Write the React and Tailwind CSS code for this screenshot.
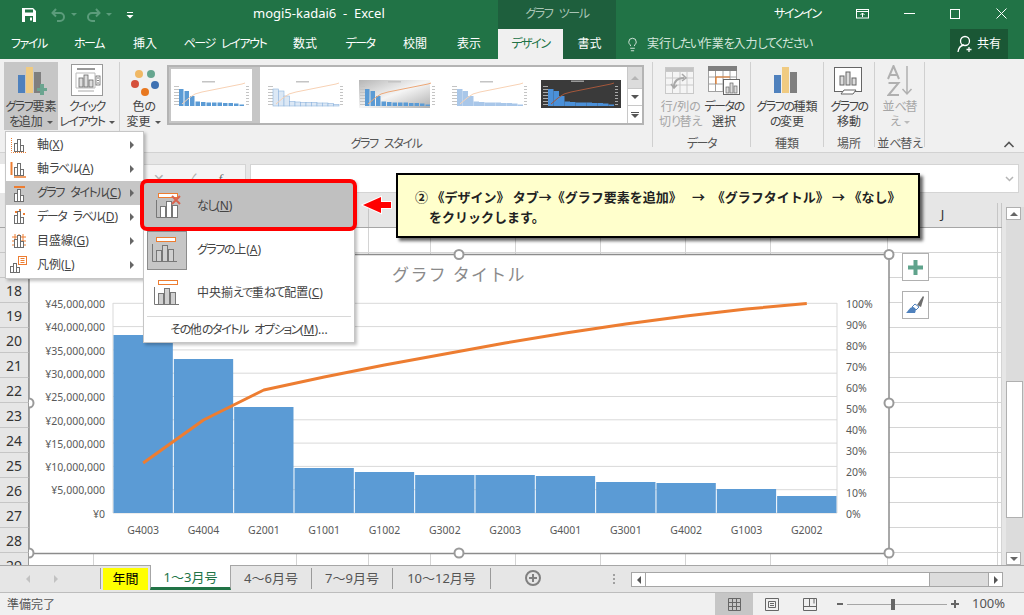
import React from "react";
import { Lightbulb } from "lucide-react";

const bars = [335, 359, 407, 468, 472, 475, 475, 476, 482, 483, 489, 496];
const names = ["G4003","G4004","G2001","G1001","G1002","G3002","G2003","G4001","G3001","G4002","G1003","G2002"];
const lineY = [463, 420, 390, 377, 365, 354, 343, 333, 324, 316, 309, 303.5];
const x0 = 113, bw = 60.33;
const leftAxis = ["¥45,000,000","¥40,000,000","¥35,000,000","¥30,000,000","¥25,000,000","¥20,000,000","¥15,000,000","¥10,000,000","¥5,000,000","¥0"];
const rowNums = [16,17,18,19,20,21,22,23,24,25,26,27,28,29];
const colCells = [0,1,2,3,4,5,6,7,8,9,10];

function K({ children }) {
  const parts = String(children).split(/([ぁ-んァ-ヶー]+)/);
  return <>{parts.map((p, i) => (i % 2 ? <span key={i} className="tracking-[-1.4px]">{p}</span> : p.replace(/ /g, "\u00A0\u00A0")))}</>;
}

function Caret({ c = "border-t-[#555]" }) {
  return <span className={`inline-block w-0 h-0 ml-[4px] align-middle border-x-[3px] border-t-[3px] border-x-transparent ${c}`} />;
}

function TitleBar() {
  return (
    <div className="flex h-[29px] bg-[#217346] text-white shrink-0">
      <div className="w-[253px] flex items-center pl-[22px]">
        <svg width="14" height="14" viewBox="0 0 14 14"><path d="M0 0h11l3 3v11H0z" fill="#fff"/><rect x="3" y="1.500" width="8" height="3" fill="#217346"/><rect x="3" y="8" width="8" height="6" fill="#217346"/><rect x="8" y="9.500" width="2" height="3" fill="#fff"/></svg>
        <svg className="ml-[15px]" width="15" height="14" viewBox="0 0 15 14" fill="none" stroke="#5b9c7b" strokeWidth="2"><path d="M5 1 1.500 5 5 8.500M2 5h7a4 4 0 0 1 0 8H6"/></svg>
        <span className="ml-[5px] w-0 h-0 border-x-[3px] border-t-[3px] border-x-transparent border-t-[#5b9c7b]" />
        <svg className="ml-[9px]" width="15" height="14" viewBox="0 0 15 14" fill="none" stroke="#5b9c7b" strokeWidth="2"><path d="M10 1l3.500 4L10 8.500M13 5H6a4 4 0 0 0 0 8h3"/></svg>
        <span className="ml-[5px] w-0 h-0 border-x-[3px] border-t-[3px] border-x-transparent border-t-[#5b9c7b]" />
        <svg className="ml-[14px]" width="8" height="8" viewBox="0 0 8 8" fill="#fff"><rect x="1" y="1" width="6" height="1"/><path d="M0.500 4h7L4 7.500z"/></svg>
      </div>
      <div className="w-[245px] flex items-center text-[13px] whitespace-pre leading-none pb-[3px]">mogi5-kadai6  -  Excel</div>
      <div className="w-[118px] flex items-center justify-center bg-[#1e5f3d] text-[#a9c4b5] pb-[2px]"><K>グラフ ツール</K></div>
      <div className="flex-1 flex items-center pl-[158px] pb-[2px]">
        <span className="w-[82px]"><K>サインイン</K></span>
        <svg width="14" height="10" viewBox="0 0 14 10" fill="none" stroke="#fff"><rect x="0.500" y="0.500" width="12" height="8.500"/><path d="M0.500 2.500h12M6.500 8V4M4.500 6l2-2 2 2"/></svg>
        <span className="ml-[34px] w-[11px] h-[1px] bg-white" />
        <span className="ml-[35px] w-[10px] h-[10px] border border-white" />
        <svg className="ml-[36px]" width="11" height="11" viewBox="0 0 11 11" stroke="#fff"><path d="M0.500 0.500l10 10M10.500 0.500l-10 10"/></svg>
      </div>
    </div>
  );
}

const tabs = [["ファイル","w-[58px]"],["ホーム","w-[62px]"],["挿入","w-[50px]"],["ページ レイアウト","w-[110px]"],["数式","w-[50px]"],["データ","w-[60px]"],["校閲","w-[50px]"],["表示","w-[58px]"]];

function TabBar() {
  return (
    <div className="flex h-[30px] bg-[#217346] text-white shrink-0 items-stretch">
      {tabs.map(([t, w]) => <div key={t} className={`${w} flex items-center justify-center whitespace-nowrap`}><K>{t}</K></div>)}
      <div className="w-[65px] flex items-center justify-center bg-[#f0f0f0] text-[#217346]"><K>デザイン</K></div>
      <div className="w-[53px] flex items-center justify-center bg-[#1e5f3d]">書式</div>
      <div className="flex items-center ml-[9px] text-[#d5e6dc]">
        <Lightbulb size={15} strokeWidth={1.400} color="#e8f1ec" />
        <span className="ml-[7px]"><K>実行したい作業を入力してください</K></span>
      </div>
      <div className="ml-auto mr-[16px] w-[58px] flex items-center justify-center bg-[#1a5735]">
        <svg width="17" height="18" viewBox="0 0 17 18" fill="none" stroke="#fff" strokeWidth="1.300"><circle cx="8" cy="6" r="4.500"/><path d="M1 17c.5-4 3-6.500 6-7M12 12v5M9.500 14.500h5"/></svg>
        <span className="ml-[3px]">共有</span>
      </div>
    </div>
  );
}

function MiniChart({ v }) {
  const hs = [17, 15, 10, 4.500, 4, 3.500, 3.500, 3.500, 3, 3, 2.500, 1.500];
  const dark = v === 5, gb = v === 3;
  const line = "M10 26 L17 20 L23 16 L30 14 L40 12 L50 10 L60 8 L70 6 L73 5";
  const tick = dark ? "#aaa" : "#c4c4c4";
  return (
    <svg width="80" height="34" viewBox="0 0 80 34">
      {gb && <defs><linearGradient id="gb" x1="0" y1="0" x2="1" y2="1"><stop offset="0" stopColor="#b5b5b5"/><stop offset="0.500" stopColor="#f5f5f5"/><stop offset="1" stopColor="#b0b0b0"/></linearGradient></defs>}
      {dark && <rect x="0" y="2" width="80" height="28" fill="#3a3a3a"/>}
      {gb && <rect x="1" y="2" width="71" height="28" fill="url(#gb)"/>}
      <rect x="30" y={v === 5 ? 2.500 : 3} width="13" height="1.500" fill={dark ? "#999" : "#c4c4c4"}/>
      {[8,11,14,17,20,23,26].map(y => <g key={y}><rect x={2} y={y} width="5" height="1" fill={tick}/><rect x="74" y={y} width="3" height="1" fill={tick}/></g>)}
      {hs.map((h, i) => {
        const x = 7 + i * 5.500;
        if (v === 2) return <rect key={i} x={x} y={28 - h} width="5.500" height={h} fill="#dce8f5" stroke="#8fb5de" strokeWidth="0.600"/>;
        if (v === 4) return <rect key={i} x={x} y={28 - h} width="5.500" height={h} fill="#a9c7e9"/>;
        if (v === 5) return <rect key={i} x={x} y={28 - h} width="5.500" height={h} fill="#4a90d9"/>;
        return <rect key={i} x={x} y={28 - h} width="4.500" height={h} fill="#5b9bd5"/>;
      })}
      <path d={line} fill="none" stroke={dark ? "#a5573a" : gb ? "#eda878" : "#f8d2b5"} strokeWidth="1"/>
    </svg>
  );
}

function BarsBig({ colors }) {
  return (
    <svg width="30" height="30" viewBox="0 0 30 30">
      <rect x="2" y="9" width="7" height="18" fill={colors[0]}/>
      <rect x="10" y="1" width="7" height="26" fill={colors[1]}/>
      <rect x="18" y="6" width="7" height="21" fill={colors[2]}/>
    </svg>
  );
}

function RibbonBtn({ icon, lines, w, caret, dim, hover }) {
  return (
    <div className={`${w} shrink-0 flex flex-col items-center ${hover ? "bg-[#c6c6c6]" : ""} h-[68px] ${dim ? "text-[#a6a6a6]" : ""}`}>
      <div className="h-[37px] flex items-center justify-center">{icon}</div>
      <div className="text-center leading-[15px] whitespace-nowrap">
        <div><K>{lines[0]}</K></div>
        <div><K>{lines[1]}</K>{caret && <Caret c={dim ? "border-t-[#bbb]" : "border-t-[#555]"} />}</div>
      </div>
    </div>
  );
}

function Group({ w, label, children, cls = "" }) {
  return (
    <div className={`${w} shrink-0 flex flex-col h-[85px] border-r border-[#d0d0d0]`}>
      <div className={`h-[72px] flex ${cls}`}>{children}</div>
      <div className="h-[13px] leading-[20px] text-center text-[#555] whitespace-nowrap"><K>{label}</K></div>
    </div>
  );
}

function Ribbon() {
  return (
    <div className="h-[94px] shrink-0 flex pt-[3px] pl-[4px] bg-[#f0f0f0] border-b border-[#d2d2d2] relative">
      <Group w="w-[116px]" label="">
        <RibbonBtn w="w-[54px]" hover caret lines={["グラフ要素","を追加"]} icon={
          <svg width="32" height="34" viewBox="0 0 32 34"><rect x="3" y="11" width="7" height="18" fill="#4f81bd"/><rect x="11" y="3" width="7" height="26" fill="#f0cb82"/><rect x="19" y="8" width="7" height="21" fill="#7f7f7f"/><path d="M22 24h3v-4h4v4h3v3h-3v4h-4v-4h-3z" fill="#6aa48f"/></svg>} />
        <RibbonBtn w="w-[58px]" caret lines={["クイック","レイアウト"]} icon={
          <svg width="33" height="33" viewBox="0 0 33 33" fill="none"><rect x="0.500" y="0.500" width="31" height="31" fill="#fff" stroke="#9a9a9a"/><path d="M6 5h18" stroke="#999" strokeWidth="2"/><path d="M5 9h19v15H5z" stroke="#bbb"/><rect x="8" y="14" width="4" height="9" fill="#ddd" stroke="#666" strokeWidth="0.800"/><rect x="13" y="11" width="4" height="12" fill="#ddd" stroke="#666" strokeWidth="0.800"/><rect x="18" y="16" width="4" height="7" fill="#ddd" stroke="#666" strokeWidth="0.800"/><rect x="25" y="12" width="4" height="9" stroke="#666" strokeWidth="0.800"/><path d="M26 14h2M26 16.500h2M26 19h2" stroke="#666" strokeWidth="0.800"/><path d="M7 27h16" stroke="#aaa"/></svg>} />
      </Group>
      <Group w="w-[533px]" label="グラフ スタイル">
        <RibbonBtn w="w-[47px]" caret lines={["色の","変更"]} icon={
          <svg width="30" height="32" viewBox="0 0 30 32"><circle cx="10" cy="9" r="4" fill="#f0b864"/><circle cx="22" cy="9" r="4" fill="#66a68f"/><circle cx="6" cy="19" r="4" fill="#d5503b"/><circle cx="26" cy="20" r="4" fill="#3f72b2"/><circle cx="16" cy="27" r="4" fill="#e87820"/></svg>} />
        <div className="w-[477px] h-[60px] mt-[3px] flex bg-white border-2 border-[#b4b4b4]">
          <div className="w-[460px] flex">
            <div className="w-[91px] shrink-0 border-[2px] border-r-[8px] border-[#c6c6c6] bg-white flex items-center justify-center"><MiniChart v={1} /></div>
            <div className="w-[92px] shrink-0 flex items-center justify-center"><MiniChart v={2} /></div>
            <div className="w-[92px] shrink-0 flex items-center justify-center"><MiniChart v={3} /></div>
            <div className="w-[92px] shrink-0 flex items-center justify-center"><MiniChart v={4} /></div>
            <div className="w-[89px] shrink-0 flex items-center justify-center"><MiniChart v={5} /></div>
          </div>
          <div className="w-[15px] flex flex-col border-l border-[#c8c8c8]">
            <div className="h-[21px] bg-[#dcdcdc] flex items-center justify-center"><span className="w-0 h-0 border-x-[4px] border-b-[4px] border-x-transparent border-b-[#b5b5b5]" /></div>
            <div className="h-[18px] border-y border-[#c8c8c8] flex items-center justify-center"><span className="w-0 h-0 border-x-[4px] border-t-[4px] border-x-transparent border-t-[#555]" /></div>
            <div className="flex-1 flex flex-col items-center justify-center"><span className="w-[8px] h-[1px] bg-[#555] mb-[1px]" /><span className="w-0 h-0 border-x-[4px] border-t-[4px] border-x-transparent border-t-[#555]" /></div>
          </div>
        </div>
      </Group>
      <Group w="w-[98px]" label="データ" cls="pl-[2px]">
        <RibbonBtn w="w-[50px]" dim lines={["行/列の","切り替え"]} icon={
          <svg width="30" height="28" viewBox="0 0 30 28" fill="none" stroke="#c9c9c9"><rect x="0.500" y="0.500" width="28" height="26" fill="#f5f5f5"/><rect x="0.500" y="0.500" width="28" height="4" fill="#c4c4c4"/><path d="M0 11h29M0 18h29M7.500 5v22M15 5v22M22 5v22"/><path d="M9 20c0-6 4-9 10-9" stroke="#a8a8a8" strokeWidth="2"/><path d="M17 7l4 4-4 3M6 17l3 4 3-3" stroke="#a8a8a8" strokeWidth="1.500"/></svg>} />
        <RibbonBtn w="w-[38px]" lines={["データの","選択"]} icon={
          <svg width="32" height="30" viewBox="0 0 32 30" fill="none" stroke="#a0a0a0"><rect x="0.500" y="0.500" width="28" height="25" fill="#fff"/><rect x="0" y="0" width="29" height="5" fill="#7f7f7f" stroke="none"/><path d="M0 11h29M0 18h29M7.500 5v21M15 5v21M22 5v21"/><path d="M8 18V11h14" stroke="#e87820" strokeWidth="1.200"/><rect x="15.500" y="13.500" width="16" height="15" fill="#fff" stroke="#666"/><rect x="18" y="21" width="3" height="6" fill="#ddd" stroke="#666" strokeWidth="0.700"/><rect x="22" y="17" width="3" height="10" fill="#ddd" stroke="#666" strokeWidth="0.700"/><rect x="26" y="20" width="3" height="7" fill="#ddd" stroke="#666" strokeWidth="0.700"/></svg>} />
      </Group>
      <Group w="w-[73px]" label="種類">
        <RibbonBtn w="w-[72px]" lines={["グラフの種類","の変更"]} icon={<BarsBig colors={["#4f81bd","#f0cb82","#7f7f7f"]} />} />
      </Group>
      <Group w="w-[51px]" label="場所">
        <RibbonBtn w="w-[50px]" lines={["グラフの","移動"]} icon={
          <svg width="30" height="28" viewBox="0 0 30 28" fill="none" stroke="#666"><rect x="0.500" y="0.500" width="27" height="24" fill="#fff"/><rect x="6" y="9" width="4" height="9" fill="#ddd"/><rect x="12" y="5" width="4" height="13" fill="#ddd"/><rect x="18" y="11" width="4" height="7" fill="#ddd"/><path d="M7 27l3-4h12l-3 4z" fill="#fff"/></svg>} />
      </Group>
      <Group w="w-[50px]" label="並べ替え">
        <RibbonBtn w="w-[50px]" dim caret lines={["並べ替","え"]} icon={
          <svg width="27" height="32" viewBox="0 0 27 32" fill="none" stroke="#b0b0b0" strokeWidth="2"><path d="M1 14 6.500 1 12 14M3 10h7"/><path d="M1.500 18h10L1.500 30h10.500"/><path d="M20 1v28M15.500 24l4.500 5 4.500-5" strokeWidth="1.500"/></svg>} />
      </Group>
      <svg className="absolute left-[1003px] top-[82px]" width="12" height="7" viewBox="0 0 12 7" fill="none" stroke="#555" strokeWidth="1.600"><path d="M1.500 6l4.500-4.500L10.500 6"/></svg>
    </div>
  );
}

function FormulaBar() {
  return (
    <div className="h-[50px] shrink-0 bg-[#e6e6e6] flex pt-[11px]">
      <div className="w-[140px] h-[29px] bg-white" />
      <div className="w-[106px] h-[29px] bg-[#f4f4f4] border-y border-r border-[#d4d4d4] flex items-center text-[#b0b0b0]">
        <span className="ml-[13px] text-[14px] leading-none">✕</span>
        <span className="ml-[22px] text-[14px] leading-none">✓</span>
        <span className="ml-[22px] text-[#666] italic text-[13px] leading-none [font-family:'Liberation_Serif',serif]">f<sub className="text-[9px]">x</sub></span>
      </div>
      <div className="ml-[4px] w-[769px] h-[29px] bg-white border border-[#d4d4d4] flex items-center justify-end pr-[4px]">
        <svg width="9" height="6" viewBox="0 0 9 6" fill="none" stroke="#b5b5b5" strokeWidth="1.500"><path d="M1 1l3.500 3.500L8 1"/></svg>
      </div>
    </div>
  );
}

function Chart() {
  const plotLines = [303.3,326.6,349.9,373.2,396.5,419.8,443.1,466.4,489.7,513];
  const handles = [[459,254.5],[889,254.5],[29,403],[889,403],[29,553],[459,553],[889,553]];
  return (
    <svg className="absolute left-[29px] top-[45px]" width="870" height="316" viewBox="29 248 870 316">
      <rect x="29" y="254.500" width="860" height="299" fill="#fff" stroke="#8c8c8c" strokeWidth="1.500"/>
      {plotLines.map(y => <line key={y} x1="113" x2="837" y1={y} y2={y} stroke="#d9d9d9" strokeWidth="1"/>)}
      <line x1="113" x2="113" y1="303" y2="513" stroke="#d9d9d9"/>
      <line x1="837" x2="837" y1="303" y2="513" stroke="#d9d9d9"/>
      {bars.map((t, i) => <rect key={i} x={x0 + i * bw + 0.500} y={t} width={bw - 1} height={513 - t} fill="#5b9bd5"/>)}
      <polyline points={lineY.map((y, i) => `${x0 + bw / 2 + i * bw},${y}`).join(" ")} fill="none" stroke="#ed7d31" strokeWidth="3" strokeLinejoin="round"/>
      <text x="459" y="281" textAnchor="middle" fontSize="17" letterSpacing="1.300" fill="#8a8a8a" className="[font-feature-settings:normal]">グラフ タイトル</text>
      <g fontSize="10.500" fill="#595959">
        {leftAxis.map((t, i) => <text key={t} x="105" y={308 + i * 23.300} textAnchor="end">{t}</text>)}
        {[100,90,80,70,60,50,40,30,20,10,0].map((t, i) => <text key={t} x="846" y={308 + i * 21} >{t}%</text>)}
        {names.map((t, i) => <text key={t} x={x0 + bw / 2 + i * bw} y="534" textAnchor="middle">{t}</text>)}
      </g>
      {handles.map(([x, y]) => <circle key={`${x}-${y}`} cx={x} cy={y} r="4.500" fill="#fff" stroke="#9a9a9a" strokeWidth="2"/>)}
    </svg>
  );
}

function Sheet() {
  const cols = "grid grid-cols-[65px_203px_72px_62px_85px_85px_85px_85px_117px_110px_4px]";
  return (
    <div className="h-[362px] shrink-0 flex relative overflow-hidden">
      <div className="w-[1002px] shrink-0 flex flex-col">
        <div className="h-[25px] shrink-0 flex bg-[#e6e6e6] border-b border-[#a6a6a6]">
          <div className="w-[29px] border-r border-[#a6a6a6]" />
          <div className={`${cols} flex-1`}>
            {colCells.map(c => <div key={c} className="border-r border-[#c6c6c6] flex items-center justify-center text-[#333] text-[13px]">{c === 9 ? "J" : ""}</div>)}
          </div>
        </div>
        {rowNums.map(n => (
          <div key={n} className="h-[25px] shrink-0 flex">
            <div className="w-[29px] shrink-0 bg-[#e6e6e6] border-r border-b border-r-[#9a9a9a] border-b-[#c6c6c6] flex items-center justify-center text-[14px] text-[#333]">{n}</div>
            <div className={`${cols} flex-1 bg-white`}>
              {colCells.map(c => <div key={c} className="border-r border-b border-[#d4d4d4]" />)}
            </div>
          </div>
        ))}
      </div>
      <div className="flex-1 bg-[#e6e6e6] pl-[4px] pt-[4px] pb-[0px] flex flex-col items-stretch">
        <div className="bg-[#dcdcdc] flex-1 flex flex-col">
          <div className="h-[13px] w-[15px] bg-white border border-[#b0b0b0] flex items-center justify-center"><span className="w-0 h-0 border-x-[4px] border-b-[4px] border-x-transparent border-b-[#666]" /></div>
          <div className="h-[137px] w-[17px] mt-[161px] bg-white border border-[#b0b0b0]" />
          <div className="h-[13px] w-[15px] mt-auto bg-white border border-[#b0b0b0] flex items-center justify-center"><span className="w-0 h-0 border-x-[4px] border-t-[4px] border-x-transparent border-t-[#666]" /></div>
        </div>
      </div>
      <Chart />
      <div className="absolute left-[902px] top-[50px] w-[27px] h-[28px] bg-white border border-[#b0b0b0] flex items-center justify-center">
        <svg width="15" height="15" viewBox="0 0 15 15"><path d="M5.500 0h4v5.500H15v4H9.500V15h-4V9.500H0v-4h5.500z" fill="#5fa38c"/></svg>
      </div>
      <div className="absolute left-[902px] top-[88px] w-[27px] h-[28px] bg-white border border-[#b0b0b0] flex items-center justify-center">
        <svg width="21" height="20" viewBox="0 0 21 20"><path d="M12 10L18 1l1 1-3 10z" fill="#6e6e6e"/><path d="M10 9l4 3-3 3-4-3z" fill="#fff" stroke="#4f81bd"/><path d="M8 12c-3 0-4 3-7 6h9c1-2 1-4 0-5z" fill="#4f81bd"/></svg>
      </div>
    </div>
  );
}

function SheetTabs() {
  return (
    <div className="h-[28px] shrink-0 bg-[#e6e6e6] border-y border-[#a6a6a6] border-b-[#bdbdbd] flex text-[13px] text-[#555]">
      <div className="w-[101px] h-[21px] mt-[2px] border-r border-[#9a9a9a] flex items-center pl-[26px]">
        <span className="w-0 h-0 border-y-[4px] border-r-[4px] border-y-transparent border-r-[#c2c2c2]" />
        <span className="ml-[24px] w-0 h-0 border-y-[4px] border-l-[4px] border-y-transparent border-l-[#c2c2c2]" />
      </div>
      <div className="ml-[2px] w-[45px] h-[22px] mt-[2px] bg-[#ffff00] text-black flex items-center justify-center">年間</div>
      <div className="ml-[2px] w-[81px] h-[25px] bg-white border-x border-[#a6a6a6] border-b-[3px] border-b-[#217346] text-[#217346] flex items-center justify-center -mt-[1px] pt-[3px]">1～3月号</div>
      <div className="w-[81px] h-[21px] mt-[2px] border-r border-[#9a9a9a] flex items-center justify-center">4～6月号</div>
      <div className="w-[81px] h-[21px] mt-[2px] border-r border-[#9a9a9a] flex items-center justify-center">7～9月号</div>
      <div className="w-[98px] h-[21px] mt-[2px] border-r border-[#9a9a9a] flex items-center justify-center">10～12月号</div>
      <div className="ml-[34px] mt-[4px] w-[16px] h-[16px] rounded-full border-2 border-[#808080] flex items-center justify-center">
        <svg width="8" height="8" viewBox="0 0 8 8"><path d="M3 0h2v3h3v2H5v3H3V5H0V3h3z" fill="#808080"/></svg>
      </div>
      <div className="ml-[72px] mt-[8px] flex flex-col gap-[2px]">
        <span className="w-[2px] h-[2px] bg-[#a0a0a0]" /><span className="w-[2px] h-[2px] bg-[#a0a0a0]" /><span className="w-[2px] h-[2px] bg-[#a0a0a0]" />
      </div>
      <div className="ml-[16px] mt-[6px] w-[372px] h-[15px] bg-[#dcdcdc] border border-[#a6a6a6] flex">
        <div className="w-[14px] bg-white border-r border-[#a6a6a6] flex items-center justify-center"><span className="w-0 h-0 border-y-[4px] border-r-[4px] border-y-transparent border-r-[#555]" /></div>
        <div className="w-[284px] bg-white border-r border-[#a6a6a6]" />
        <div className="ml-auto w-[14px] bg-white border-l border-[#a6a6a6] flex items-center justify-center"><span className="w-0 h-0 border-y-[4px] border-l-[4px] border-y-transparent border-l-[#555]" /></div>
      </div>
    </div>
  );
}

function StatusBar() {
  return (
    <div className="h-[22px] shrink-0 bg-[#f0f0f0] flex items-center text-[#555]">
      <span className="ml-[7px] w-[708px] pt-[1px]">準備完了</span>
      <div className="w-[38px] h-[22px] bg-[#c6c6c6] flex items-center justify-center">
        <svg width="13" height="13" viewBox="0 0 13 13" fill="none" stroke="#666"><path d="M0.500 0.500h12v12h-12zM0.500 4.500h12M0.500 8.500h12M4.500 0.500v12M8.500 0.500v12"/></svg>
      </div>
      <div className="w-[38px] flex justify-center">
        <svg width="14" height="13" viewBox="0 0 14 13" fill="none" stroke="#666"><path d="M0.500 0.500h13v12h-13zM3.500 3.500h7v6h-7zM5 5.500h4M5 7.500h4"/></svg>
      </div>
      <div className="w-[38px] flex justify-center">
        <svg width="14" height="13" viewBox="0 0 14 13" fill="none" stroke="#666"><path d="M0.500 0.500h13v12h-13zM0.500 8.500h13M6.500 0.500v8M11 0.500v5"/></svg>
      </div>
      <span className="ml-[8px] w-[6px] h-[2px] bg-[#666]" />
      <div className="ml-[4px] w-[100px] h-[1px] bg-[#a6a6a6] relative">
        <span className="absolute left-[44px] -top-[5px] w-[4px] h-[11px] bg-[#666]" />
      </div>
      <svg className="ml-[4px]" width="8" height="8" viewBox="0 0 8 8"><path d="M3 0h2v3h3v2H5v3H3V5H0V3h3z" fill="#666"/></svg>
      <span className="ml-[13px] text-[13px]">100%</span>
    </div>
  );
}

function Tri() {
  return <span className="absolute right-[9px] top-[8px] w-0 h-0 border-y-[4px] border-l-[4px] border-y-transparent border-l-[#666]" />;
}

function MI({ k }) {
  const bar = (
    <g fill="#fff" stroke="#6e6e6e">
      <rect x="4.500" y="7.500" width="3" height="8"/><rect x="7.500" y="3.500" width="3" height="12"/><rect x="10.500" y="9.500" width="3" height="6"/>
    </g>
  );
  return (
    <svg width="18" height="18" viewBox="0 0 18 18" fill="none" className="shrink-0">
      {k === "axis" && <path d="M1.500 2v14.500H16" stroke="#ed7d31" strokeDasharray="1 1"/>}
      {k === "label" && <><path d="M1.500 2v13" stroke="#ed7d31" strokeWidth="2"/><path d="M4 17h12" stroke="#ed7d31" strokeWidth="1.500"/></>}
      {k === "title" && <path d="M4 3h11" stroke="#ed7d31" strokeWidth="2"/>}
      {k === "data" && <><rect x="5" y="3" width="2" height="2" fill="#ed7d31"/><rect x="9" y="1" width="2" height="2" fill="#ed7d31"/><rect x="13" y="5" width="2" height="2" fill="#ed7d31"/></>}
      {k === "grid" && <path d="M2 5h14M2 9h14M2 13h14M5 2v14M9 2v14M13 2v14" stroke="#ed7d31"/>}
      {k === "legend" ? (
        <g>
          <rect x="8.500" y="0.500" width="8" height="8" fill="#fff" stroke="#ed7d31"/><path d="M10.500 2.500h4M10.500 4.500h4M10.500 6.500h4" stroke="#ed7d31"/>
          <g fill="#fff" stroke="#6e6e6e"><rect x="0.500" y="10.500" width="3" height="6"/><rect x="3.500" y="7.500" width="3" height="9"/><rect x="6.500" y="11.500" width="3" height="5"/></g>
        </g>
      ) : (k === "title" ? <g transform="translate(0,2)">{bar}</g> : bar)}
    </svg>
  );
}

function U({ a, u, b }) {
  return <><K>{a}</K><span className="underline">{u}</span>{b}</>;
}

function Menu() {
  const items = [
    ["axis","軸(","X",")"],["label","軸ラベル(","A",")"],["title","グラフ タイトル(","C",")"],
    ["data","データ ラベル(","D",")"],["grid","目盛線(","G",")"],["legend","凡例(","L",")"],
  ];
  return (
    <div className="absolute left-[5px] top-[131px] w-[139px] h-[148px] bg-white border border-[#c6c6c6] pt-[1px] shadow-[2px_2px_3px_rgba(0,0,0,0.25)]">
      {items.map(([k, a, u, b]) => (
        <div key={k} className={`relative h-[24px] flex items-center pl-[4px] ${k === "title" ? "bg-[#c6c6c6]" : ""}`}>
          <MI k={k} />
          <span className="ml-[9px] whitespace-nowrap"><U a={a} u={u} b={b} /></span>
          <Tri />
        </div>
      ))}
    </div>
  );
}

function SubIcon({ x }) {
  return (
    <svg width="30" height="28" viewBox="0 0 30 28" fill="none">
      <rect x={x ? 2.500 : 4.500} y="1.500" width="19" height="4" fill="#fff" stroke="#ed7d31"/>
      <path d={x ? "M0.500 8v17.500H20" : "M0.500 8v17.500H25"} stroke="#777"/>
      <g fill={x ? "#fff" : "#d0d0d0"} stroke="#777"><rect x="4.500" y="14.500" width="5" height="11"/><rect x="10.500" y="9.500" width="5" height="16"/><rect x="16.500" y="13.500" width="5" height="12"/></g>
      {x && <path d="M16 4l8 8M24 4l-8 8" stroke="#d9634e" strokeWidth="2"/>}
    </svg>
  );
}

function SubMenu() {
  return (
    <div className="absolute left-[143px] top-[180px] w-[212px] h-[163px] bg-white border border-[#c6c6c6] shadow-[2px_2px_3px_rgba(0,0,0,0.25)] flex flex-col">
      <div className="h-[49px] flex items-center pl-[12px] bg-[#c0c0c0]">
        <SubIcon x />
        <span className="ml-[11px]"><U a="なし(" u="N" b=")" /></span>
      </div>
      <div className="h-[40px] flex items-center">
        <div className="ml-[3px] w-[40px] h-[39px] bg-[#c6c6c6] border border-[#8c8c8c] flex items-center justify-center"><SubIcon /></div>
        <span className="ml-[10px]"><U a="グラフの上(" u="A" b=")" /></span>
      </div>
      <div className="h-[46px] flex items-center pl-[10px]">
        <SubIcon />
        <span className="ml-[13px] whitespace-nowrap"><U a="中央揃えで重ねて配置(" u="C" b=")" /></span>
      </div>
      <div className="mx-[3px] h-[1px] bg-[#d8d8d8]" />
      <div className="flex-1 flex items-center justify-center whitespace-nowrap pt-[1px]"><U a="その他のタイトル オプション(" u="M" b=")..." /></div>
      <div className="absolute -left-[4px] -top-[2px] w-[217px] h-[52px] border-[4px] border-[#ff0000] rounded-[7px]" />
    </div>
  );
}

function Arrow() {
  return (
    <svg className="absolute left-[360px] top-[194px]" width="33" height="22" viewBox="0 0 33 22">
      <path d="M3 11 21 3v5h10v6H21v5z" fill="#ff0000" stroke="#fff" strokeWidth="2" paintOrder="stroke"/>
    </svg>
  );
}

function Callout() {
  return (
    <div className="absolute left-[396px] top-[173px] w-[524px] h-[65px] bg-[#ffffcc] border-2 border-black shadow-[3px_3px_3px_rgba(0,0,0,0.6)] pl-[17px] pt-[12px] font-bold text-[13px] leading-[20px] text-[#222] whitespace-pre [font-feature-settings:normal]">
      <div>② 《デザイン》 タブ→《グラフ要素を追加》   →  《グラフタイトル》 → 《なし》</div>
      <div className="pl-[14px]">をクリックします。</div>
    </div>
  );
}

export default function App() {
  return (
    <div className="relative w-[1024px] h-[615px] overflow-hidden flex flex-col bg-[#f0f0f0] text-[12px] text-[#444] [font-family:'Noto_Sans','Noto_Sans_CJK_JP',sans-serif] [font-feature-settings:'palt']">
      <TitleBar />
      <TabBar />
      <Ribbon />
      <FormulaBar />
      <Sheet />
      <SheetTabs />
      <StatusBar />
      <Menu />
      <SubMenu />
      <Arrow />
      <Callout />
    </div>
  );
}
